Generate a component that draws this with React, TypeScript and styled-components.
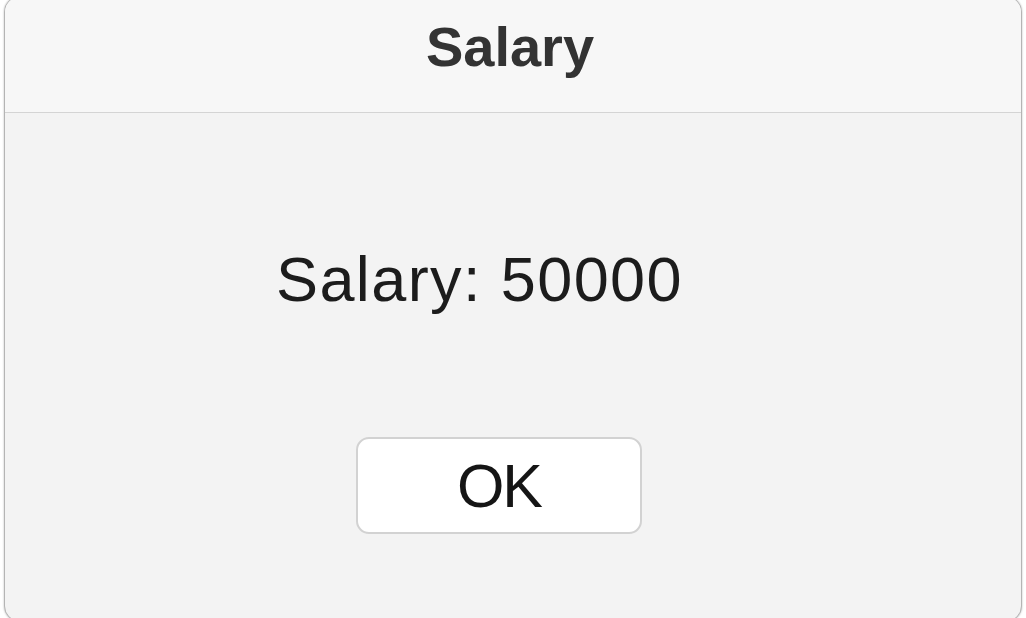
import React from "react";
import styled, { createGlobalStyle } from "styled-components";

const Global = createGlobalStyle`
  html, body { margin: 0; padding: 0; background: #ffffff; overflow: hidden; }
  body { font-family: "Liberation Sans", Arial, Helvetica, sans-serif; }
`;

const Page = styled.div`
  width: 1026px;
  height: 618px;
  overflow: hidden;
  display: flex;
  justify-content: center;
`;

const Window = styled.div`
  box-sizing: border-box;
  width: 1018px;
  height: 626px;
  margin-top: -4px;
  border: 1px solid #b4b4b4;
  border-radius: 16px;
  box-shadow: 0 0 2px rgba(0, 0, 0, 0.3);
  background: #f3f3f3;
  overflow: hidden;
  display: flex;
  flex-direction: column;
`;

const TitleBar = styled.div`
  box-sizing: border-box;
  height: 116px;
  padding-top: 22px;
  background: #f7f7f7;
  border-bottom: 1px solid #d4d4d4;
  display: flex;
  justify-content: center;
`;

const Title = styled.h1`
  margin: 0;
  font-size: 56px;
  line-height: 56px;
  font-weight: 700;
  color: #333333;
  transform: translateX(-3px);
`;

const Body = styled.div`
  display: flex;
  flex-direction: column;
  align-items: flex-start;
  padding-top: 135px;
`;

const Message = styled.p`
  margin: 0 0 0 271px;
  font-size: 63px;
  line-height: 62px;
  letter-spacing: 1.4px;
  color: #1c1c1c;
`;

const Button = styled.button`
  box-sizing: border-box;
  margin: 127px 0 0 351px;
  width: 286px;
  height: 97px;
  background: #ffffff;
  border: 2px solid #d2d2d2;
  border-radius: 13px;
  font-family: "Liberation Sans", Arial, Helvetica, sans-serif;
  font-size: 61px;
  line-height: 62px;
  letter-spacing: -2px;
  color: #151515;
  padding: 0 0 0 0;
  display: flex;
  align-items: center;
  justify-content: center;
`;

export default function App() {
  return (
    <>
      <Global />
      <Page>
        <Window>
          <TitleBar>
            <Title>Salary</Title>
          </TitleBar>
          <Body>
            <Message>Salary: 50000</Message>
            <Button>OK</Button>
          </Body>
        </Window>
      </Page>
    </>
  );
}
